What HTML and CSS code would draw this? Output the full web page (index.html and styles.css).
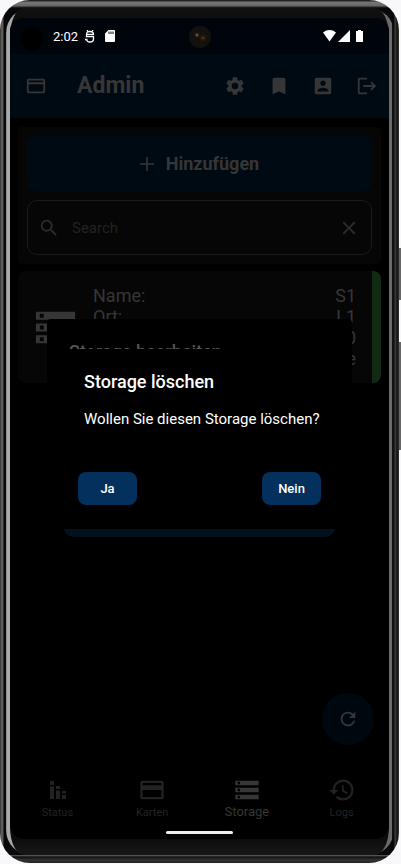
FILE: index.html
```html
<!DOCTYPE html>
<html lang="de">
<head>
<meta charset="utf-8">
<meta name="viewport" content="width=device-width, initial-scale=1">
<title>Admin</title>
<link rel="stylesheet" href="styles.css">
</head>
<body>
<div class="phone">
  <div class="rim">
    <div class="bezel">
     <div class="glass">
      <div class="screen">
        <div class="statusbar">
          <span class="lens"></span>
          <span class="clock">2:02</span>
          <svg class="debug" viewBox="0 0 10 13"><path d="M1.500 4.500C1.500 2 3 1.500 5 1.500s3.500.5 3.500 3M2 0l1 1.500M8 0L7 1.500M1 4.500h8M1.500 4.500v2.200h7v2.300C8.500 11 7 12 5 12S1.500 11 1.500 9M0 9.500h2.500" fill="none" stroke="currentColor" stroke-width="1.300"/></svg>
          <svg class="sd" viewBox="0 0 10 12"><path fill="currentColor" fill-rule="evenodd" d="M3.500 0H9a1 1 0 0 1 1 1v10a1 1 0 0 1-1 1H1a1 1 0 0 1-1-1V3.500zM3.500 1.500V4h1V1.500zm2 0V4h1V1.500zm2 0V4h1V1.500z"/></svg>
          <span class="camera"></span>
          <svg class="signals" viewBox="0 0 40 12"><path fill="currentColor" d="M0 2.500C4-.8 9-.8 13 2.500L6.500 11.500zM27 0v12H15zM35 0h3v1h2v11h-7V1h2z"/></svg>
        </div>
        <header class="appbar">
          <button class="icon-btn menu" aria-label="Karten"><svg viewBox="0 0 24 24"><path d="M20 4H4c-1.110 0-2 .89-2 2v12c0 1.110.89 2 2 2h16c1.110 0 2-.89 2-2V6c0-1.110-.89-2-2-2zm0 14H4v-8h16zm0-10H4V6h16z"/></svg></button>
          <h1>Admin</h1>
          <button class="icon-btn" aria-label="Einstellungen"><svg viewBox="0 0 24 24"><path d="M19.140 12.940c.04-.3.06-.61.06-.94s-.02-.64-.07-.94l2.030-1.580c.18-.14.23-.41.12-.61l-1.920-3.320c-.12-.22-.37-.29-.59-.22l-2.390.96c-.5-.38-1.030-.7-1.620-.94l-.36-2.540c-.04-.24-.24-.41-.48-.41h-3.840c-.24 0-.43.17-.47.41l-.36 2.540c-.59.24-1.130.57-1.620.94l-2.390-.96c-.22-.08-.47 0-.59.22L2.740 8.870c-.12.21-.08.47.12.61l2.030 1.580c-.05.3-.09.63-.09.94s.02.64.07.94l-2.030 1.580c-.18.14-.23.41-.12.61l1.920 3.320c.12.22.37.29.59.22l2.390-.96c.5.38 1.030.7 1.620.94l.36 2.540c.05.24.24.41.48.41h3.840c.24 0 .44-.17.47-.41l.36-2.540c.59-.24 1.130-.56 1.620-.94l2.390.96c.22.08.47 0 .59-.22l1.920-3.320c.12-.22.07-.47-.12-.61zM12 15.600a3.600 3.600 0 1 1 0-7.200 3.600 3.600 0 0 1 0 7.200z"/></svg></button>
          <button class="icon-btn" aria-label="Lesezeichen"><svg viewBox="0 0 24 24"><path d="M17 3H7c-1.100 0-2 .9-2 2v16l7-3 7 3V5c0-1.100-.9-2-2-2z"/></svg></button>
          <button class="icon-btn" aria-label="Konto"><svg viewBox="0 0 24 24"><path fill-rule="evenodd" d="M3 5v14c0 1.100.89 2 2 2h14c1.100 0 2-.9 2-2V5c0-1.100-.9-2-2-2H5c-1.110 0-2 .9-2 2zm12 4c0 1.660-1.340 3-3 3s-3-1.340-3-3 1.340-3 3-3 3 1.340 3 3zm-9 8c0-2 4-3.100 6-3.100s6 1.100 6 3.100v1H6z"/></svg></button>
          <button class="icon-btn" aria-label="Abmelden"><svg viewBox="0 0 24 24"><path d="M17 7l-1.410 1.410L18.170 11H8v2h10.170l-2.580 2.580L17 17l5-5zM4 5h8V3H4c-1.100 0-2 .9-2 2v14c0 1.100.9 2 2 2h8v-2H4z"/></svg></button>
        </header>

        <main>
          <section class="panel">
            <button class="add"><svg viewBox="0 0 14 14"><path d="M7 0v14M0 7h14" fill="none" stroke="currentColor" stroke-width="1.600"/></svg>Hinzufügen</button>
            <div class="search">
              <svg viewBox="0 0 24 24"><path d="M15.500 14h-.79l-.28-.27A6.470 6.470 0 0 0 16 9.500 6.500 6.500 0 1 0 9.500 16c1.610 0 3.090-.59 4.230-1.570l.27.28v.79l5 4.990L20.490 19zm-6 0a4.500 4.500 0 1 1 0-9 4.500 4.500 0 0 1 0 9z"/></svg>
              <input type="text" placeholder="Search" aria-label="Search">
              <button class="clear" aria-label="Löschen"><svg viewBox="0 0 24 24"><path d="M19 6.410L17.590 5 12 10.590 6.410 5 5 6.410 10.590 12 5 17.590 6.410 19 12 13.410 17.590 19 19 17.590 13.410 12z"/></svg></button>
            </div>
          </section>

          <section class="card">
            <svg class="card-icon" viewBox="0 0 24 24"><path fill-rule="evenodd" d="M2 20h20v-4H2zm2-3h2v2H4zM2 4v4h20V4zm4 3H4V5h2zm-4 7h20v-4H2zm2-3h2v2H4z"/></svg>
            <div class="rows">
              <div class="row"><span>Name:</span><span>S1</span></div>
              <div class="row"><span>Ort:</span><span>L1</span></div>
              <div class="row end"><span>0</span></div>
              <div class="row end"><span>e</span></div>
            </div>
          </section>
        </main>

        <button class="fab" aria-label="Aktualisieren"><svg viewBox="0 0 24 24"><path d="M17.650 6.350A7.960 7.960 0 0 0 12 4a8 8 0 1 0 7.730 10h-2.080A6 6 0 1 1 12 6c1.660 0 3.140.69 4.220 1.780L13 11h7V4z"/></svg></button>

        <nav class="tabs">
          <a href="#status"><svg viewBox="0 0 28 28"><path d="M7 5h4v4H7zM7 10.500h4V23H7zM13 10h4v3h-4zM13 14.500h4V23h-4zM19 15h4v2.500h-4zM19 19h4v4h-4z"/></svg><span>Status</span></a>
          <a href="#karten"><svg viewBox="0 0 24 24"><path d="M20 4H4c-1.110 0-2 .89-2 2v12c0 1.110.89 2 2 2h16c1.110 0 2-.89 2-2V6c0-1.110-.89-2-2-2zm0 14H4v-6h16zm0-10H4V6h16z"/></svg><span>Karten</span></a>
          <a href="#storage" class="active"><svg viewBox="0 0 24 24"><path fill-rule="evenodd" d="M2 20h20v-4H2zm2-3h2v2H4zM2 4v4h20V4zm4 3H4V5h2zm-4 7h20v-4H2zm2-3h2v2H4z"/></svg><span>Storage</span></a>
          <a href="#logs"><svg viewBox="0 0 24 24"><path d="M13 3a9 9 0 0 0-9 9H1l3.890 3.890.07.14L9 12H6c0-3.870 3.130-7 7-7s7 3.130 7 7-3.130 7-7 7c-1.930 0-3.680-.79-4.940-2.060l-1.420 1.420A8.950 8.950 0 0 0 13 21a9 9 0 0 0 0-18zm-1 5v5l4.280 2.540.72-1.210-3.500-2.080V8z"/></svg><span>Logs</span></a>
        </nav>
        <div class="home"></div>

        <div class="dialog edit">
          <h2>Storage bearbeiten</h2>
          <div class="edit-action"></div>
        </div>
        <div class="dialog confirm" role="dialog" aria-labelledby="confirm-title">
          <h2 id="confirm-title">Storage löschen</h2>
          <p>Wollen Sie diesen Storage löschen?</p>
          <div class="choices"><button>Ja</button><button>Nein</button></div>
        </div>
      </div>
     </div>
    </div>
  </div>
  <span class="side power"></span>
  <span class="side volume"></span>
</div>
</body>
</html>
```
FILE: styles.css
```css
* { box-sizing: border-box; }

body {
  margin: 0;
  background: #f8f8fb;
  color: #363636;
  font-family: Roboto, "Liberation Sans", sans-serif;
}

button {
  border: 0;
  padding: 0;
  background: none;
  color: inherit;
  font-family: inherit;
}

svg {
  display: block;
  flex: none;
  fill: currentColor;
}

/* Phone body */
.phone {
  position: relative;
  display: flex;
  min-height: 100vh;
  padding: 0 2px 1px 0;
}

.rim {
  flex: 1;
  display: flex;
  padding: 8px 5px 8px 6px;
  border-radius: 30px;
  background:
    linear-gradient(#222 1px, #777 2px, #666 6px, #222 7px, #111 8px) top / 100% 8px no-repeat,
    linear-gradient(#666, #111 2px, #333 5px, #222 8px) bottom / 100% 8px no-repeat,
    linear-gradient(90deg, #333, #666 2px, #555 3px, #080808 4px, #080808 calc(100% - 5px), #444 calc(100% - 4px), #111 calc(100% - 2px), #333);
}

.bezel {
  flex: 1;
  display: flex;
  padding: 0 5px 0 4px;
  border-radius: 25px;
  background: linear-gradient(90deg, #777, #aaa 1px, #aaa 50%, #6b6b6b 50%, #6b6b6b calc(100% - 2px), #111 calc(100% - 2px));
}

.glass {
  flex: 1;
  display: flex;
  padding: 10px 0 16px;
  border-radius: 14px / 28px;
  background: linear-gradient(#111, #0c0c0c 20px, #0c0c0c calc(100% - 16px), #181818);
}

.side {
  position: absolute;
  right: 0;
  width: 2px;
  background: #666;
}

.power { top: 248px; height: 52px; }
.volume { top: 342px; height: 108px; }

.screen {
  position: relative;
  flex: 1;
  display: flex;
  flex-direction: column;
  border-radius: 14px;
  background: #000;
  overflow: hidden;
}

/* Status bar */
.statusbar {
  position: relative;
  display: flex;
  align-items: center;
  height: 36px;
  padding: 0 26px 0 11px;
  background: #00050b;
  color: #fff;
}

.lens {
  width: 22px;
  height: 22px;
  margin-top: 6px;
  border-radius: 50%;
  background: #000;
}

.clock { margin-left: 10px; font-size: 13px; }
.debug { width: 10px; height: 13px; margin-left: 7px; }
.sd { width: 10px; height: 12px; margin-left: 10px; }
.signals { width: 40px; height: 12px; margin-left: auto; }

.camera {
  position: absolute;
  left: 50%;
  top: 8px;
  width: 22px;
  height: 22px;
  margin-left: -11px;
  border-radius: 50%;
  background:
    radial-gradient(circle at 8px 9px, #ccc 0, #422 1px, transparent 3px),
    radial-gradient(circle at 14px 12px, #a60 0, #320 1px, transparent 4px),
    #12110f;
}

/* App bar */
.appbar {
  display: flex;
  align-items: center;
  height: 64px;
  background: #000a12;
}

.appbar h1 {
  flex: 1;
  margin: 0 0 0 19px;
  font-size: 23px;
  line-height: 28px;
  font-weight: 700;
}

.icon-btn {
  display: grid;
  place-items: center;
  width: 44px;
  height: 44px;
}

.icon-btn.menu { margin-left: 4px; }
.icon-btn svg { width: 22px; height: 22px; }

/* Content */
main {
  flex: 1;
  display: flex;
  flex-direction: column;
  gap: 7px;
  padding: 9px 8px 0;
}

.panel {
  display: flex;
  flex-direction: column;
  gap: 9px;
  padding: 9px;
  border-radius: 4px;
  background: #060606;
}

.add {
  display: flex;
  align-items: center;
  justify-content: center;
  gap: 12px;
  height: 55px;
  border-radius: 8px;
  background: #000a12;
  font-size: 18px;
  font-weight: 700;
}

.add svg { width: 14px; height: 14px; }

.search {
  display: flex;
  align-items: center;
  height: 55px;
  padding: 0 11px 0 10px;
  border: 1px solid #1b1b1b;
  border-radius: 10px;
}

.search svg { width: 22px; height: 22px; color: #2c2c2c; }

.search input {
  flex: 1;
  min-width: 0;
  margin-left: 12px;
  padding: 0;
  border: 0;
  outline: 0;
  background: none;
  color: #222;
  font: 15px Roboto, "Liberation Sans", sans-serif;
}

.search input::placeholder { color: #222; opacity: 1; }

.card {
  display: flex;
  align-items: center;
  gap: 14px;
  padding: 14px 16px 14px 14px;
  border-right: 9px solid #112a14;
  border-radius: 8px;
  background: #060606;
}

.card-icon { width: 47px; height: 47px; }
.rows { flex: 1; }

.row {
  display: flex;
  justify-content: space-between;
  font-size: 18px;
  line-height: 21px;
}

.row.end { justify-content: flex-end; }

.fab {
  display: grid;
  place-items: center;
  align-self: flex-end;
  width: 52px;
  height: 52px;
  margin: 0 15px 26px 0;
  border-radius: 50%;
  background: #00080f;
}

.fab svg { width: 22px; height: 22px; }

/* Bottom navigation */
.tabs {
  display: grid;
  grid-template-columns: repeat(4, 1fr);
  height: 60px;
  padding-top: 5px;
}

.tabs a {
  display: flex;
  flex-direction: column;
  align-items: center;
  color: #222;
  font-size: 11px;
  line-height: 18px;
  text-decoration: none;
}

.tabs svg { width: 28px; height: 28px; }
.tabs a.active { color: #363636; font-size: 13px; line-height: 16px; }

.home {
  align-self: center;
  width: 67px;
  height: 3px;
  margin-bottom: 5px;
  border-radius: 2px;
  background: #eee;
}

/* Dialogs */
.dialog {
  position: absolute;
  left: 37px;
  right: 37px;
  border-radius: 4px;
  background: #000;
}

.dialog h2 {
  margin: 0;
  font-size: 18px;
  line-height: 22px;
  font-weight: 500;
}

.edit {
  display: flex;
  flex-direction: column;
  justify-content: space-between;
  top: 301px;
  height: 228px;
  padding: 22px 17px 10px;
}

.edit h2 { padding-left: 5px; color: #555; }

.edit-action {
  height: 34px;
  border-radius: 10px;
  background: #001120;
}

.confirm {
  top: 331px;
  padding: 22px 31px 24px;
  color: #fff;
}

.confirm h2 { padding-left: 6px; }

.confirm p {
  margin: 16px 0 43px;
  padding-left: 6px;
  font-size: 15px;
  line-height: 20px;
}

.choices { display: flex; justify-content: space-between; }

.choices button {
  width: 59px;
  height: 33px;
  border-radius: 8px;
  background: #03305c;
  font-size: 13px;
  font-weight: 500;
}
```
